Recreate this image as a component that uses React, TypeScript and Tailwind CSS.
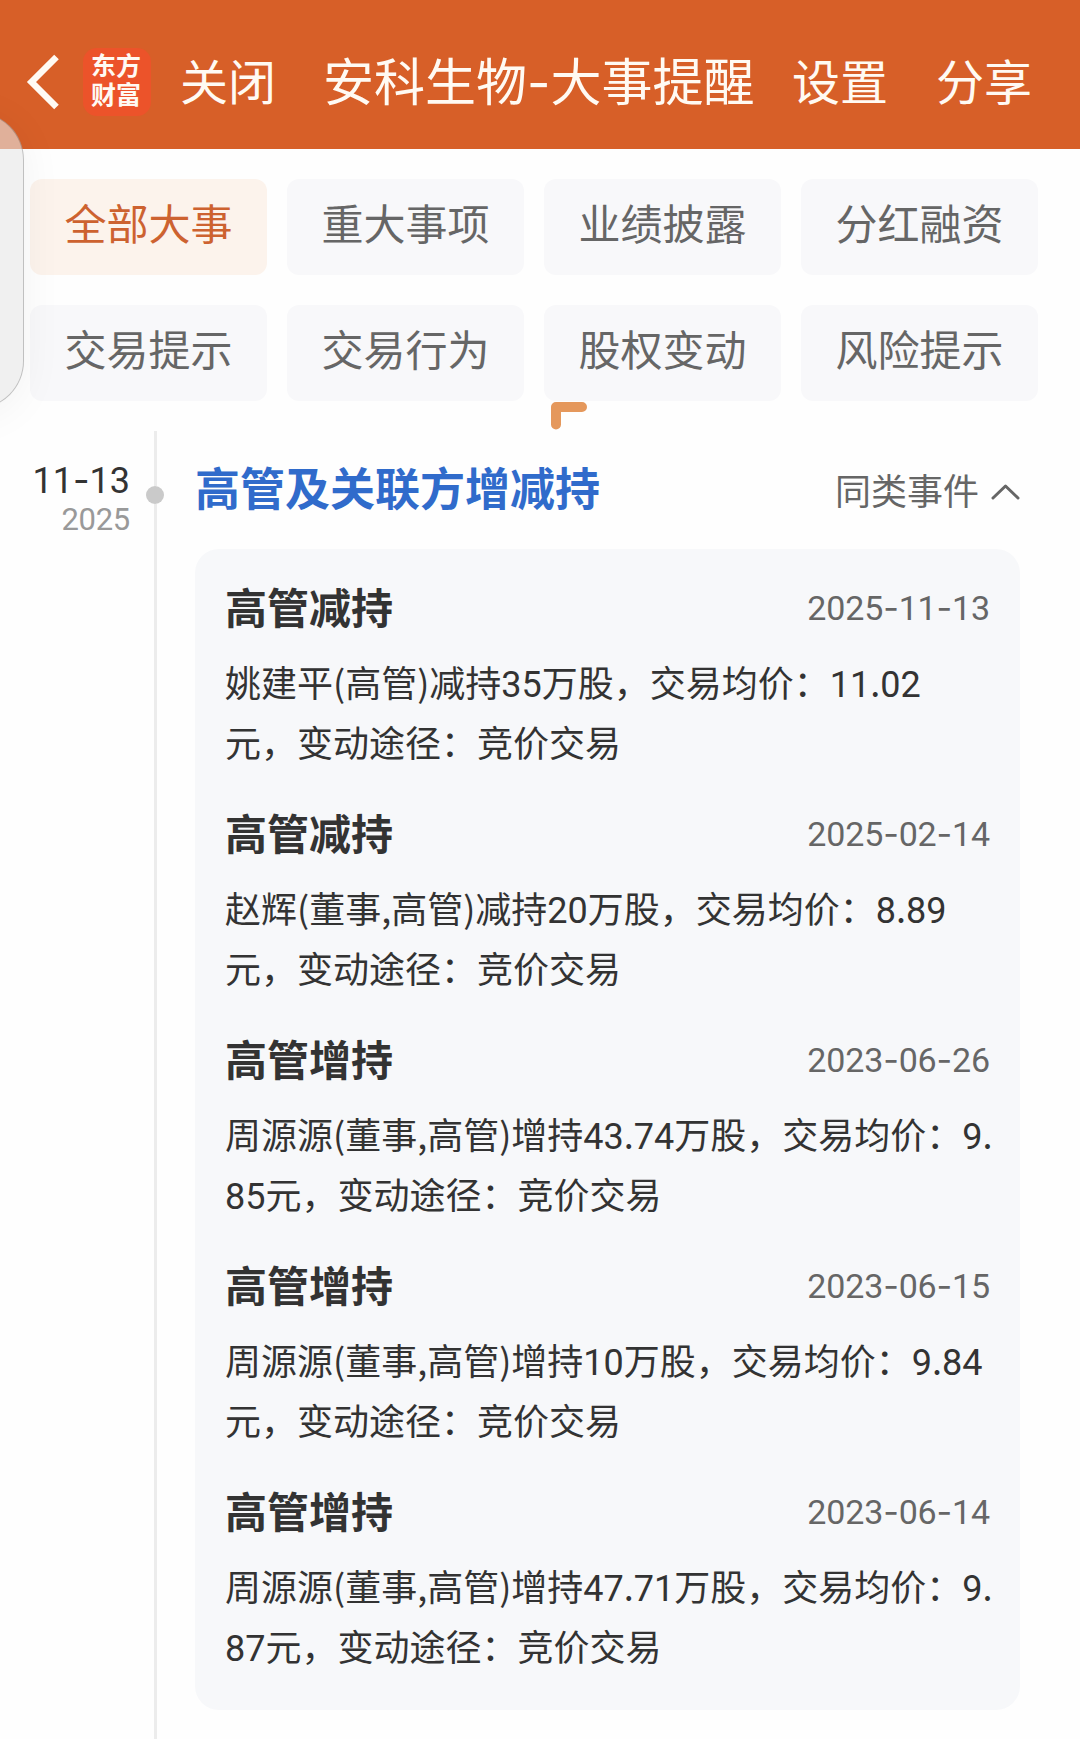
import { useState } from 'react';

type EventItem = {
  title: string;
  date: string;
  content: string;
};

const tabs = ['全部大事', '重大事项', '业绩披露', '分红融资', '交易提示', '交易行为', '股权变动', '风险提示'];

const events: EventItem[] = [
  {
    title: '高管减持',
    date: '2025-11-13',
    content: '姚建平(高管)减持35万股，交易均价：11.02\n元，变动途径：竞价交易',
  },
  {
    title: '高管减持',
    date: '2025-02-14',
    content: '赵辉(董事,高管)减持20万股，交易均价：8.89\n元，变动途径：竞价交易',
  },
  {
    title: '高管增持',
    date: '2023-06-26',
    content: '周源源(董事,高管)增持43.74万股，交易均价：9.\n85元，变动途径：竞价交易',
  },
  {
    title: '高管增持',
    date: '2023-06-15',
    content: '周源源(董事,高管)增持10万股，交易均价：9.84\n元，变动途径：竞价交易',
  },
  {
    title: '高管增持',
    date: '2023-06-14',
    content: '周源源(董事,高管)增持47.71万股，交易均价：9.\n87元，变动途径：竞价交易',
  },
];

// Digits in Roboto, hyphens in the wider Inter, the rest in the page font
function Mixed({ text }: { text: string }) {
  return (
    <>
      {text.split(/(\d+|-)/).map((part, index) => {
        if (part === '-') {
          return (
            <span key={index} className="font-['Inter',sans-serif] leading-none">
              -
            </span>
          );
        }
        return /^\d/.test(part) ? (
          <span key={index} className="font-['Roboto',sans-serif] leading-none">
            {part}
          </span>
        ) : (
          part
        );
      })}
    </>
  );
}

function Header() {
  return (
    <header className="flex h-[149px] items-center bg-[#d75f28] pt-[14px] text-[48px] leading-[60px] text-[#fffaf3]">
      <svg className="ml-[24px] h-[60px] w-[36px] shrink-0" viewBox="0 0 36 60" fill="none">
        <path d="M32.500 5 L7.500 30 L32.500 55" stroke="currentColor" strokeWidth="6.500" />
      </svg>
      <div className="ml-[23px] flex h-[68px] w-[68px] shrink-0 flex-col items-center justify-center rounded-[14px] bg-[#ec532a] pr-[2px] pb-[5px] text-[25px] leading-[29px] font-bold">
        <span>东方</span>
        <span>财富</span>
      </div>
      <button className="ml-[29px] shrink-0 pb-[5px]">关闭</button>
      <h1 className="ml-[47px] w-[433px] shrink-0 pb-[5px] text-[51px] whitespace-nowrap">
        <Mixed text="安科生物-大事提醒" />
      </h1>
      <button className="ml-[36px] shrink-0 pb-[5px]">设置</button>
      <button className="ml-[48px] shrink-0 pb-[5px]">分享</button>
    </header>
  );
}

function EventCard({ item }: { item: EventItem }) {
  return (
    <div>
      <div className="flex h-[60px] items-center justify-between">
        <h3 className="text-[42px] leading-[60px] font-bold">{item.title}</h3>
        <span className="text-[34px] leading-[60px] tracking-[-0.15px] text-[#666]">
          <Mixed text={item.date} />
        </span>
      </div>
      <p className="mt-[15px] text-[36px] leading-[60px] whitespace-pre">
        <Mixed text={item.content} />
      </p>
    </div>
  );
}

export default function App() {
  const [activeTab, setActiveTab] = useState('全部大事');
  const [open, setOpen] = useState(true);

  return (
    <div className="relative flex h-[1739px] w-[1080px] flex-col overflow-hidden bg-[#fefefe] font-['Noto_Sans_CJK_SC',sans-serif] text-[#333]">
      <Header />

      {/* Category filter */}
      <nav className="grid grid-cols-4 gap-x-[20px] gap-y-[30px] pt-[30px] pr-[42px] pl-[30px]">
        {tabs.map((tab) => (
          <button
            key={tab}
            onClick={() => setActiveTab(tab)}
            className={`h-[96px] rounded-[12px] pb-[11px] text-[42px] leading-[60px] ${
              tab === activeTab ? 'bg-[#fcf3ec] text-[#cd6230]' : 'bg-[#f8f8fa] text-[#666]'
            }`}
          >
            {tab}
          </button>
        ))}
      </nav>

      {/* Timeline */}
      <main className="mt-[30px] flex flex-1">
        <div className="w-[130px] pt-[26px] text-right">
          <div className="text-[36px] leading-[40px]">
            <Mixed text="11-13" />
          </div>
          <div className="text-[31px] leading-[36px] tracking-[-0.3px] text-[#999]">
            <Mixed text="2025" />
          </div>
        </div>
        <div className="ml-[16px] flex w-[18px] flex-col items-center">
          <div className="h-[55px] w-[3px] bg-[#ececec]" />
          <div className="size-[18px] rounded-full bg-[#cacaca]" />
          <div className="w-[3px] flex-1 bg-[#ececec]" />
        </div>
        <section className="ml-[31px] w-[825px] pt-[25px]">
          <div className="flex h-[60px] items-center justify-between">
            <h2 className="pt-[1px] text-[45px] leading-[60px] font-bold text-[#306bcb]">高管及关联方增减持</h2>
            <button onClick={() => setOpen(!open)} className="flex items-center pt-[5px] text-[36px] leading-[56px] text-[#666]">
              同类事件
              <svg className="mt-[6px] ml-[11px] h-[20px] w-[30px]" viewBox="0 0 30 20" fill="none">
                <path d="M3 16 L15.500 4 L28 16" stroke="currentColor" strokeWidth="3" strokeLinecap="round" strokeLinejoin="round" />
              </svg>
            </button>
          </div>
          {open && (
            <div className="mt-[33px] flex h-[1161px] flex-col gap-[31px] rounded-[24px] bg-[#f7f8fa] px-[30px] pt-[27px]">
              {events.map((item) => (
                <EventCard key={item.date} item={item} />
              ))}
            </div>
          )}
        </section>
      </main>

      {/* Corner mark over the filter */}
      <svg className="absolute top-[401px] left-[550px] h-[30px] w-[38px]" viewBox="0 0 38 30" fill="none">
        <path d="M6 23.500 V6 H32" stroke="#e5985c" strokeWidth="10" strokeLinecap="round" strokeLinejoin="round" />
      </svg>

      {/* Floating side handle */}
      <div className="absolute top-[112px] -left-[73px] h-[297px] w-[97px] rounded-[48px] border border-black/20 bg-[#e6e6e6]/60 shadow-[0_6px_44px_rgba(0,0,0,0.05)]" />
    </div>
  );
}
